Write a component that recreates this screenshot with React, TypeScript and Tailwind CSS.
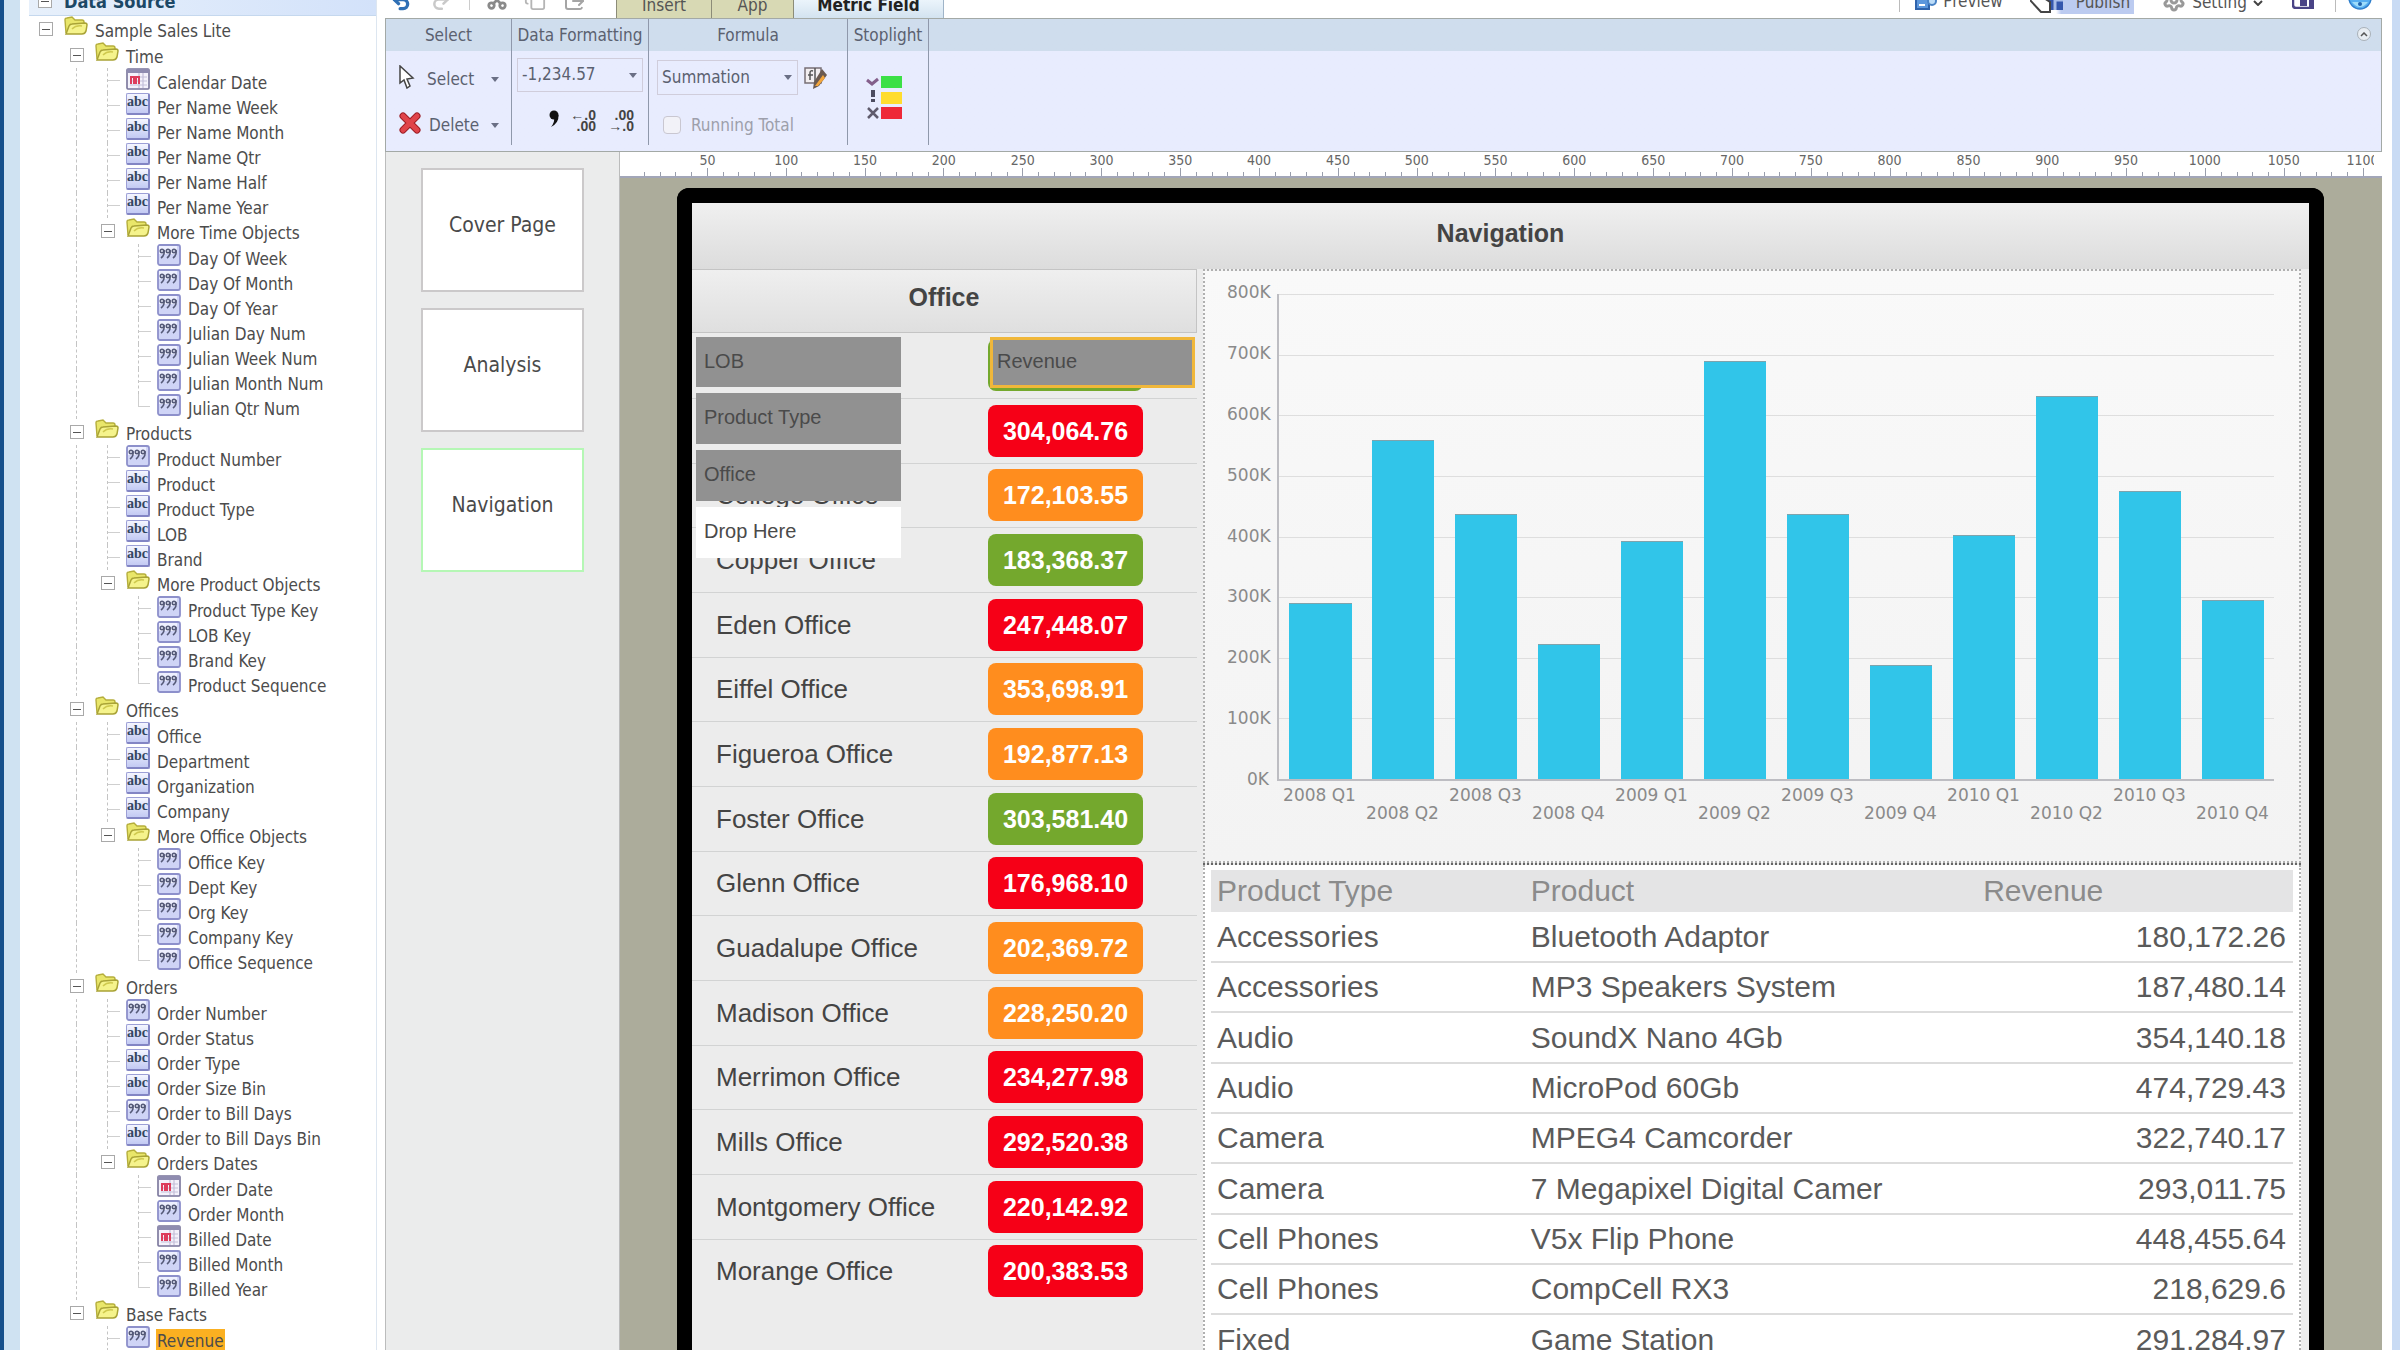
import { ReactNode } from "react";
import { Settings, Scissors, Copy, ClipboardPaste, Undo2, Redo2 } from "lucide-react";

type NodeKind = "folder" | "text" | "number" | "date";

interface TreeRow {
  depth: number;
  kind: NodeKind;
  label: string;
}

const folder = (depth: number, label: string): TreeRow => ({ depth, kind: "folder", label });
const text = (depth: number, label: string): TreeRow => ({ depth, kind: "text", label });
const num = (depth: number, label: string): TreeRow => ({ depth, kind: "number", label });
const date = (depth: number, label: string): TreeRow => ({ depth, kind: "date", label });

const treeRows: TreeRow[] = [
  folder(0, "Sample Sales Lite"),
  folder(1, "Time"),
  date(2, "Calendar Date"),
  text(2, "Per Name Week"),
  text(2, "Per Name Month"),
  text(2, "Per Name Qtr"),
  text(2, "Per Name Half"),
  text(2, "Per Name Year"),
  folder(2, "More Time Objects"),
  num(3, "Day Of Week"),
  num(3, "Day Of Month"),
  num(3, "Day Of Year"),
  num(3, "Julian Day Num"),
  num(3, "Julian Week Num"),
  num(3, "Julian Month Num"),
  num(3, "Julian Qtr Num"),
  folder(1, "Products"),
  num(2, "Product Number"),
  text(2, "Product"),
  text(2, "Product Type"),
  text(2, "LOB"),
  text(2, "Brand"),
  folder(2, "More Product Objects"),
  num(3, "Product Type Key"),
  num(3, "LOB Key"),
  num(3, "Brand Key"),
  num(3, "Product Sequence"),
  folder(1, "Offices"),
  text(2, "Office"),
  text(2, "Department"),
  text(2, "Organization"),
  text(2, "Company"),
  folder(2, "More Office Objects"),
  num(3, "Office Key"),
  num(3, "Dept Key"),
  num(3, "Org Key"),
  num(3, "Company Key"),
  num(3, "Office Sequence"),
  folder(1, "Orders"),
  num(2, "Order Number"),
  text(2, "Order Status"),
  text(2, "Order Type"),
  text(2, "Order Size Bin"),
  num(2, "Order to Bill Days"),
  text(2, "Order to Bill Days Bin"),
  folder(2, "Orders Dates"),
  date(3, "Order Date"),
  num(3, "Order Month"),
  date(3, "Billed Date"),
  num(3, "Billed Month"),
  num(3, "Billed Year"),
  folder(1, "Base Facts"),
  num(2, "Revenue"),
];

const offices = [
  { name: "", value: "", color: "bg-[#74a82d]" },
  { name: "", value: "304,064.76", color: "bg-[#f60017]" },
  { name: "College Office", value: "172,103.55", color: "bg-[#ff8d1e]" },
  { name: "Copper Office", value: "183,368.37", color: "bg-[#74a82d]" },
  { name: "Eden Office", value: "247,448.07", color: "bg-[#f60017]" },
  { name: "Eiffel Office", value: "353,698.91", color: "bg-[#ff8d1e]" },
  { name: "Figueroa Office", value: "192,877.13", color: "bg-[#ff8d1e]" },
  { name: "Foster Office", value: "303,581.40", color: "bg-[#74a82d]" },
  { name: "Glenn Office", value: "176,968.10", color: "bg-[#f60017]" },
  { name: "Guadalupe Office", value: "202,369.72", color: "bg-[#ff8d1e]" },
  { name: "Madison Office", value: "228,250.20", color: "bg-[#ff8d1e]" },
  { name: "Merrimon Office", value: "234,277.98", color: "bg-[#f60017]" },
  { name: "Mills Office", value: "292,520.38", color: "bg-[#f60017]" },
  { name: "Montgomery Office", value: "220,142.92", color: "bg-[#f60017]" },
  { name: "Morange Office", value: "200,383.53", color: "bg-[#f60017]" },
];

const quarters = [
  { label: "2008 Q1", value: 291 },
  { label: "2008 Q2", value: 560 },
  { label: "2008 Q3", value: 437 },
  { label: "2008 Q4", value: 222 },
  { label: "2009 Q1", value: 393 },
  { label: "2009 Q2", value: 690 },
  { label: "2009 Q3", value: 437 },
  { label: "2009 Q4", value: 188 },
  { label: "2010 Q1", value: 403 },
  { label: "2010 Q2", value: 632 },
  { label: "2010 Q3", value: 475 },
  { label: "2010 Q4", value: 296 },
];

const products = [
  ["Accessories", "Bluetooth Adaptor", "180,172.26"],
  ["Accessories", "MP3 Speakers System", "187,480.14"],
  ["Audio", "SoundX Nano 4Gb", "354,140.18"],
  ["Audio", "MicroPod 60Gb", "474,729.43"],
  ["Camera", "MPEG4 Camcorder", "322,740.17"],
  ["Camera", "7 Megapixel Digital Camer", "293,011.75"],
  ["Cell Phones", "V5x Flip Phone", "448,455.64"],
  ["Cell Phones", "CompCell RX3", "218,629.6"],
  ["Fixed", "Game Station", "291,284.97"],
];

const yTicks = ["800K", "700K", "600K", "500K", "400K", "300K", "200K", "100K", "0K"];
const rulerMarks = Array.from({ length: 22 }, (_, i) => (i + 1) * 50);

// a guide line continues below a row while another row of the same depth follows
const hasNext = (index: number, depth: number) => {
  for (let i = index + 1; i < treeRows.length; i++) {
    if (treeRows[i].depth < depth) return false;
    if (treeRows[i].depth === depth) return true;
  }
  return depth === 2;
};

const NodeIcon = ({ kind }: { kind: NodeKind }) => {
  if (kind === "folder") {
    return (
      <svg viewBox="0 0 24 22" className="h-[22px] w-6 shrink-0" aria-hidden="true">
        <path d="M2 17 L1 4 Q1 2 3 2 L8 1 L11 4 L18 4 Q20 4 20 6 L20 9" fill="#e9e66a" stroke="#b5ae3c" strokeWidth="1.4" />
        <path d="M2 18 L5 10 Q6 8 8 8 L21 7 Q23 7 23 9 L22 15 Q21 18 18 18 Z" fill="#f5f38c" stroke="#a9a336" strokeWidth="1.5" />
        <path d="M8 13 Q12 9 18 10" fill="none" stroke="#cfc94e" strokeWidth="1.5" />
      </svg>
    );
  }
  if (kind === "date") {
    return (
      <svg viewBox="0 0 24 22" className="h-[22px] w-6 shrink-0" aria-hidden="true">
        <rect x="1" y="1" width="22" height="20" rx="1" fill="#f4f2fb" stroke="#777399" strokeWidth="1.6" />
        <rect x="1" y="1" width="22" height="4" fill="#8f8cb0" />
        <path d="M4 9H21M4 13H21M4 17H21M13 5V20M17 5V20" stroke="#c3bfd9" strokeWidth="1.2" />
        <path d="M5 16V9H8V16M10 16V9H13V16" fill="none" stroke="#dd3d5c" strokeWidth="2" />
      </svg>
    );
  }
  if (kind === "text") {
    return (
      <span className="flex h-[22px] w-6 shrink-0 items-center justify-center rounded-xs border border-r-2 border-b-2 border-[#9c9fd6] border-r-[#8285c4] border-b-[#8285c4] bg-linear-to-b from-[#f4f6ff] to-[#c3caf3] pb-1 font-['Liberation_Serif',serif] text-[14px] leading-4 font-bold text-[#33465f]">
        abc
      </span>
    );
  }
  return (
    <svg viewBox="0 0 24 22" className="h-[22px] w-6 shrink-0" aria-hidden="true">
      <rect x="1" y="1" width="22" height="20" rx="2" fill="#cfd4f6" stroke="#8d90cb" strokeWidth="1.8" />
      <rect x="2" y="2" width="18" height="8" fill="#eef0ff" />
      {[5, 11, 17].map((x) => (
        <g key={x} stroke="#555a78" fill="none" strokeWidth="1.6">
          <circle cx={x} cy="7" r="1.7" />
          <path d={`M${x + 2} 6 Q${x + 3} 11 ${x - 1} 14`} />
        </g>
      ))}
    </svg>
  );
};

const Minus = () => (
  <span className="flex size-[14px] items-center justify-center border border-[#a9a9a9] bg-white">
    <span className="h-px w-2 bg-[#555]" />
  </span>
);

const DataTree = () => (
  <aside className="w-[348px] shrink-0 overflow-hidden border-r border-[#dde6f0] bg-white text-[17px] text-[#4c4c4c]">
    <div className="flex h-4 items-end gap-3 overflow-hidden border-b border-[#c5d8ee] bg-linear-to-r from-[#e7f0fb] to-[#d3e2fa] pl-[9px]">
      <button aria-label="Collapse data source" className="mb-[7px]">
        <Minus />
      </button>
      <h2 className="mb-[3px] text-[18px] leading-5 font-bold text-[#1c4866]">Data Source</h2>
    </div>
    <ul className="pl-px">
      {treeRows.map((row, index) => {
        const isFolder = row.kind === "folder";
        const last = !hasNext(index, row.depth);
        const selected = row.label === "Revenue";
        return (
          <li key={index} className={`flex ${isFolder ? "h-[26px]" : "h-[25px]"}`}>
            {Array.from({ length: row.depth }, (_, level) => (
              <span key={level} className="flex w-[31px] shrink-0 justify-end">
                <span
                  className={`w-4 ${level > 0 && hasNext(index, level) ? "border-l border-dashed border-[#c4c4c4]" : ""}`}
                />
              </span>
            ))}
            {isFolder ? (
              <span className="flex w-[31px] shrink-0 items-center justify-center">
                <button aria-label={`Collapse ${row.label}`}>
                  <Minus />
                </button>
              </span>
            ) : (
              <span className="flex w-[31px] shrink-0 justify-end">
                <span className={`w-4 ${last ? "" : "border-l border-dashed border-[#c4c4c4]"}`}>
                  <span
                    className={`block h-1/2 w-3 border-b border-[#cfcfcf] ${last ? "border-l" : ""}`}
                  />
                </span>
              </span>
            )}
            <span className="ml-[3px]">
              <NodeIcon kind={row.kind} />
            </span>
            <span
              className={`mt-[3px] ml-[6px] h-[25px] pr-px pl-px leading-[25px] whitespace-nowrap ${selected ? "bg-[#fbb021]" : ""}`}
            >
              {row.label}
            </span>
          </li>
        );
      })}
    </ul>
  </aside>
);

const Caret = () => (
  <svg viewBox="0 0 8 5" className="h-[5px] w-2 shrink-0" aria-hidden="true">
    <path d="M0 0H8L4 5Z" fill="#6a6f85" />
  </svg>
);

const TopBar = () => (
  <div className="flex h-[18px] items-end overflow-hidden pr-[10px] text-[17px] leading-5 text-[#555]">
    <div className="flex items-end gap-4 pl-1">
      <button aria-label="Undo" className="mb-[6px]">
        <Undo2 className="h-5 w-6 text-[#2f6fb5]" strokeWidth={4} />
      </button>
      <button aria-label="Redo" className="mb-[6px]">
        <Redo2 className="h-5 w-6 text-[#c9c9c9]" strokeWidth={3} />
      </button>
      <span className="mb-2 h-5 w-px bg-[#ccc]" />
      <button aria-label="Cut" className="mb-[7px]">
        <Scissors className="size-[22px] -rotate-90 text-[#8a8a8a]" strokeWidth={3} />
      </button>
      <button aria-label="Copy" className="mb-[7px]">
        <Copy className="size-[22px] text-[#b5b5b5]" />
      </button>
      <button aria-label="Paste" className="mb-[7px]">
        <ClipboardPaste className="size-6 text-[#a5a5a5]" />
      </button>
    </div>
    <nav className="ml-[30px] flex items-end text-center">
      <button className="w-[96px] border-x border-[#8c8c78] bg-[#d8d9b4] pb-[3px]">Insert</button>
      <button className="w-[82px] border-r border-[#8c8c78] bg-[#d8d9b4] pb-[3px]">App</button>
      <button className="w-[150px] border-r border-[#9fb4c8] bg-linear-to-b from-[#f2f9fe] to-[#d3e3f0] pb-[3px] font-bold text-[#222]">
        Metric Field
      </button>
    </nav>
    <div className="ml-auto flex items-end">
      <span className="mb-[6px] h-5 w-px bg-[#bbb]" />
      <button className="ml-[15px] flex items-end gap-[6px]">
        <svg viewBox="0 0 22 22" className="mb-2 size-[22px]" aria-hidden="true">
          <rect x="1" y="5" width="13" height="16" fill="#5c97dc" stroke="#2f63ab" strokeWidth="2" />
          <path d="M4 17H10" stroke="#fff" strokeWidth="2" />
          <circle cx="17" cy="13" r="4" fill="#bcdcf8" stroke="#4a83c5" strokeWidth="2" />
        </svg>
        <span className="mb-[7px]">Preview</span>
      </button>
      <button className="mb-[4px] ml-[27px] flex items-end gap-[10px] bg-linear-to-r from-transparent from-25% to-[#bccbf0] to-30% pr-1">
        <svg viewBox="0 0 36 22" className="h-[22px] w-9" aria-hidden="true">
          <rect x="17" y="2" width="16" height="16" fill="#3557ad" />
          <path d="M25 18V8H33" stroke="#a8bce8" strokeWidth="3" fill="none" />
          <path d="M0 8 L11 20 H20 V10 L8 2" fill="#fff" stroke="#444" strokeWidth="2" />
        </svg>
        <span className="mb-[2px]">Publish</span>
      </button>
      <button className="ml-7 flex items-end gap-[6px]">
        <Settings className="mb-[6px] size-6 text-[#999]" strokeWidth={3} />
        <span className="mb-[6px]">Setting</span>
        <svg viewBox="0 0 10 6" className="mb-[12px] h-[6px] w-[10px]" aria-hidden="true">
          <path d="M1 1L5 5L9 1" stroke="#444" strokeWidth="2" fill="none" />
        </svg>
      </button>
      <button aria-label="Save" className="mb-[9px] ml-[29px]">
        <svg viewBox="0 0 22 20" className="h-5 w-[22px]" aria-hidden="true">
          <path d="M1 0V16Q1 19 4 19H21V0" fill="#fff" stroke="#4a4486" strokeWidth="2.5" />
          <rect x="8" y="10" width="7" height="7" fill="#4a4486" />
          <path d="M19 0V19" stroke="#4a4486" strokeWidth="4" />
        </svg>
      </button>
      <span className="mb-[6px] ml-[21px] h-5 w-px bg-[#bbb]" />
      <button aria-label="Help" className="mb-[8px] ml-3">
        <svg viewBox="0 0 24 24" className="size-6" aria-hidden="true">
          <circle cx="12" cy="12" r="11" fill="#57aef0" stroke="#2f7fcc" strokeWidth="1.5" />
          <path d="M4 16Q12 26 20 16" fill="#9edcfa" />
          <circle cx="12" cy="18" r="2" fill="#1e62ad" />
        </svg>
      </button>
    </div>
  </div>
);

const RibbonGroup = ({ title, width, children }: { title: string; width: string; children: ReactNode }) => (
  <section className={`${width} h-[126px] shrink-0 border-r border-[#8f98ab]`}>
    <h3 className="h-8 text-center leading-8">{title}</h3>
    {children}
  </section>
);

const decimalsText = "font-['Liberation_Sans',sans-serif] text-[14px] leading-[11px] font-bold text-[#444]";

const Ribbon = () => (
  <div className="flex h-[134px] border border-[#a3a9a6] bg-linear-to-b from-[#cfdded] from-[32px] to-[#e8ecfe] to-[32px] text-[17px] text-[#5b6170]">
    <RibbonGroup title="Select" width="w-[126px]">
      <div className="flex flex-col gap-[26px] pt-[18px] pl-[13px] leading-5">
        <button className="flex items-center">
          <svg viewBox="0 0 16 24" className="-mt-1 h-6 w-4" aria-hidden="true">
            <path d="M1 1V18L5 15L8 23L11 21L8 14L14 13Z" fill="#fff" stroke="#444" strokeWidth="1.5" />
          </svg>
          <span className="mr-4 ml-3 w-[48px] text-left">Select</span>
          <Caret />
        </button>
        <button className="flex items-center">
          <svg viewBox="0 0 22 22" className="-mt-1 size-[22px]" aria-hidden="true">
            <path d="M4 4L18 18M18 4L4 18" stroke="#9c1d24" strokeWidth="7" strokeLinecap="round" />
            <path d="M4 4L18 18M18 4L4 18" stroke="#e0444a" strokeWidth="5" strokeLinecap="round" />
          </svg>
          <span className="mr-[10px] ml-2 w-[52px] text-left">Delete</span>
          <Caret />
        </button>
      </div>
    </RibbonGroup>
    <RibbonGroup title="Data Formatting" width="w-[137px]">
      <div className="mx-[5px] mt-[7px] flex h-[34px] items-center border border-[#d0cddb] pr-[5px]">
        <select aria-label="Number format" className="h-full w-full appearance-none pl-1">
          <option>-1,234.57</option>
        </select>
        <Caret />
      </div>
      <div className="mt-[18px] flex items-start justify-end pr-[14px]">
        <button aria-label="Thousands separator" className="mr-2">
          <svg viewBox="0 0 12 18" className="h-[18px] w-3" aria-hidden="true">
            <circle cx="6" cy="5" r="4.5" fill="#111" />
            <path d="M10.500 5Q11 13 3 17Q7 12 6 8Z" fill="#111" />
          </svg>
        </button>
        <button className={`mr-[10px] w-[28px] text-right ${decimalsText}`}>
          <span className="block">←.0</span>
          <span className="block">.00</span>
        </button>
        <button className={`w-[28px] text-right ${decimalsText}`}>
          <span className="block">.00</span>
          <span className="block">→.0</span>
        </button>
      </div>
    </RibbonGroup>
    <RibbonGroup title="Formula" width="w-[199px]">
      <div className="mt-[9px] ml-2 flex items-center gap-[6px]">
        <div className="flex h-[35px] w-[141px] items-center border border-[#d0cddb] pr-[5px]">
          <select aria-label="Formula" className="h-full w-full appearance-none pl-1">
            <option>Summation</option>
          </select>
          <Caret />
        </div>
        <button aria-label="Edit formula">
          <svg viewBox="0 0 24 24" className="size-6" aria-hidden="true">
            <rect x="1" y="2" width="16" height="15" fill="#f2eef0" stroke="#776f76" strokeWidth="1.5" />
            <path d="M9 5Q6 4 6 7V14M4 9H9M11 2V17" stroke="#555" strokeWidth="1.500" fill="none" />
            <path d="M18 3L23 9L15 20L9 23L10 16Z" fill="#6b5a50" />
            <path d="M19 9L21 12L14 20L11 20Z" fill="#f4a63c" />
          </svg>
        </button>
      </div>
      <label className="mt-[20px] ml-[14px] flex items-center text-[#9d9fab]">
        <input type="checkbox" className="mr-[10px] size-[18px] appearance-none rounded-sm border border-[#c9c7d1] bg-[#f2f2f8]" />
        <span className="leading-5">Running Total</span>
      </label>
    </RibbonGroup>
    <RibbonGroup title="Stoplight" width="w-[81px]">
      <button aria-label="Stoplight" className="mt-6 ml-[18px] block">
        <svg viewBox="0 0 36 44" className="h-11 w-9" aria-hidden="true">
          <rect x="15" y="1" width="21" height="12" fill="#3be046" />
          <rect x="15" y="17" width="21" height="12" fill="#ffdc2e" />
          <rect x="15" y="32" width="21" height="12" fill="#ee2838" />
          <path d="M1 5L6 9L12 4" stroke="#845f8b" strokeWidth="3" fill="none" />
          <path d="M7 15V22M7 24V27" stroke="#4c4c60" strokeWidth="4" />
          <path d="M2 33L12 43M12 33L2 43" stroke="#5f5b6c" strokeWidth="2.5" />
        </svg>
      </button>
    </RibbonGroup>
    <button
      aria-label="Collapse ribbon"
      className="mt-2 mr-[10px] ml-auto flex size-[14px] items-center justify-center rounded-full border border-[#a9b1b8] bg-[#e8edf2]"
    >
      <svg viewBox="0 0 8 5" className="h-[5px] w-2" aria-hidden="true">
        <path d="M1 4L4 1L7 4" stroke="#555" strokeWidth="1.500" fill="none" />
      </svg>
    </button>
  </div>
);

const Ruler = () => (
  <div className="flex h-[26px] flex-col border-b-2 border-[#a2a6b8] bg-white">
    <div className="mr-2 overflow-hidden">
      <div className="-mr-7 flex pl-[48px] text-center text-[14px] leading-4 text-[#666]">
        {rulerMarks.map((mark) => (
          <span key={mark} className="min-w-0 flex-1">
            {mark}
          </span>
        ))}
      </div>
    </div>
    <div className="flex flex-1 pr-[18px] pl-[9px]">
      {rulerMarks.map((mark) => (
        <div key={mark} className="flex flex-1 items-end">
          {[1, 2, 3, 4, 5].map((n) => (
            <span key={n} className={`flex-1 border-r border-[#999eac] ${n === 5 ? "h-2" : "h-1"}`} />
          ))}
        </div>
      ))}
    </div>
  </div>
);

const PageList = () => (
  <div className="flex w-[235px] shrink-0 flex-col gap-4 border-x border-[#bbbcbc] bg-[#ebecec] px-[35px] pt-4 text-[21px] text-[#4a4a4a]">
    {["Cover Page", "Analysis", "Navigation"].map((page) => (
      <button
        key={page}
        className={`h-[124px] border-2 bg-white pb-2 ${page === "Navigation" ? "border-[#b5f7b5]" : "border-[#cbc9ca]"}`}
      >
        {page}
      </button>
    ))}
  </div>
);

const OfficePanel = () => (
  <section className="relative w-[505px] shrink-0">
    <h2 className="h-16 border-t border-r border-b border-[#c4c4c4] bg-linear-to-b from-[#efefef] to-[#dfdfdf] text-center text-[25px] leading-[54px] font-bold text-[#444]">
      Office
    </h2>
    <table className="w-full border-collapse text-[26px] text-[#444]">
      <tbody>
        {offices.map((office, i) => (
          <tr key={i} className="h-[65px] border-b border-[#d2d3d3] last:border-0 nth-[3n]:h-16">
            <td className="py-0 pl-[24px] leading-8">{office.name}</td>
            <td className="w-[209px] p-0">
              <div
                className={`h-[52px] w-[155px] rounded-lg text-center text-[25px] leading-[52px] font-bold text-white ${office.color}`}
              >
                {office.value}
              </div>
            </td>
          </tr>
        ))}
      </tbody>
    </table>
    {/* drop targets shown over the table while a field is dragged */}
    <div className="absolute top-[68px] left-1 flex w-[205px] flex-col gap-[6px] text-[20px] leading-[48px] text-[#4a4a4a]">
      <div className="h-[50px] bg-[#919191] pl-2">LOB</div>
      <div className="h-[51px] bg-[#919191] pl-2">Product Type</div>
      <div className="h-[51px] bg-[#919191] pl-2">Office</div>
      <div className="h-[51px] bg-white pl-2">Drop Here</div>
    </div>
    <div className="absolute top-[68px] right-[2px] h-[51px] w-[205px] border-3 border-[#f0b73a] bg-[#919191] pl-1 text-[20px] leading-[43px] text-[#4a4a4a]">
      Revenue
    </div>
  </section>
);

const RevenueChart = () => (
  <section className="border-2 border-dotted border-[#b0b0b0] bg-linear-to-b from-[#f9f9f9] to-[#f3f3f3] pt-[23px] pr-[25px] pb-[39px] pl-[22px] font-['DejaVu_Sans',sans-serif] text-[17px] text-[#8a8a8a]">
    <div className="flex h-[487px]">
      <div className="-mt-3 -mb-2 flex w-[42px] flex-col justify-between text-right leading-5">
        {yTicks.map((tick) => (
          <span key={tick}>{tick}</span>
        ))}
      </div>
      <div className="relative ml-2 flex flex-1 items-end border-b-2 border-l-2 border-[#bdbdc2]">
        <div className="absolute inset-0 flex flex-col">
          {yTicks.slice(1).map((tick) => (
            <div key={tick} className="flex-1 border-t border-[#dedede]" />
          ))}
        </div>
        {quarters.map((q) => (
          <div key={q.label} className="relative flex h-full flex-1 items-end justify-center">
            <div
              className="w-3/4 border-t border-[#7fa3ac] bg-[#31c5e9]"
              style={{ height: `${q.value / 8}%` }}
            />
          </div>
        ))}
      </div>
    </div>
    <div className="ml-[51px] flex text-center leading-[18px]">
      {quarters.map((q, i) => (
        <span key={q.label} className={`flex-1 whitespace-nowrap ${i % 2 ? "pt-[23px]" : "pt-[5px]"}`}>
          {q.label}
        </span>
      ))}
    </div>
  </section>
);

const ProductTable = () => (
  <section className="flex-1 border-x-2 border-dotted border-[#b0b0b0] bg-white px-[6px] pt-[5px]">
    <table className="w-full table-fixed border-collapse text-[30px] text-[#5a5a5a]">
      <thead>
        <tr className="h-[42px] bg-[#e4e4e5] text-left text-[#8b8b8b]">
          <th className="w-[29%] py-0 pl-[6px] leading-[38px] font-normal">Product Type</th>
          <th className="w-[42%] py-0 pl-[6px] leading-[38px] font-normal">Product</th>
          <th className="py-0 pl-1 leading-[38px] font-normal">Revenue</th>
        </tr>
      </thead>
      <tbody>
        {products.map(([type, product, revenue]) => (
          <tr key={product} className="h-[50px] border-b-2 border-[#dcdcdc] nth-[3n]:h-[51px]">
            <td className="py-0 pl-[6px] leading-9">{type}</td>
            <td className="py-0 pl-[6px] leading-9 whitespace-nowrap">{product}</td>
            <td className="py-0 pr-[7px] text-right leading-9">{revenue}</td>
          </tr>
        ))}
      </tbody>
    </table>
  </section>
);

const Canvas = () => (
  <div className="flex min-w-0 flex-1 flex-col">
    <Ruler />
    <div className="flex flex-1 flex-col overflow-hidden bg-[#acac9b] pt-[10px] pr-[58px] pl-[57px]">
      <div className="flex-1 rounded-t-xl border-[15px] border-b-0 border-black bg-[#ececec] font-['Liberation_Sans',sans-serif]">
        <h1 className="h-[66px] bg-linear-to-b from-[#f0f0f0] to-[#dcdcdc] text-center text-[25px] leading-[60px] font-bold text-[#444]">
          Navigation
        </h1>
        <div className="flex">
          <OfficePanel />
          <div className="mr-2 ml-[6px] flex min-w-0 flex-1 flex-col">
            <RevenueChart />
            <div className="border-t-2 border-dotted border-[#666]" />
            <ProductTable />
          </div>
        </div>
      </div>
    </div>
  </div>
);

export default function App() {
  return (
    <div className="flex h-screen overflow-hidden border-l-4 border-[#16508c] bg-white font-['DejaVu_Sans_Condensed','DejaVu_Sans',sans-serif]">
      <div className="mr-[9px] w-4 shrink-0 bg-[#cfe2f2]" />
      <DataTree />
      <main className="ml-2 flex min-w-0 flex-1 flex-col">
        <TopBar />
        <Ribbon />
        <div className="flex min-h-0 flex-1">
          <PageList />
          <Canvas />
        </div>
      </main>
      <div className="ml-[10px] w-2 shrink-0 bg-[#c9dbf4]" />
    </div>
  );
}
